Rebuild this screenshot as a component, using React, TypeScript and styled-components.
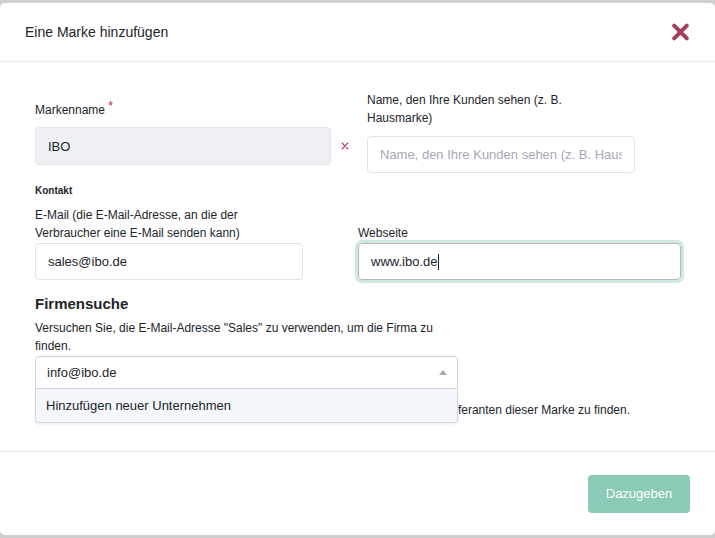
import { FC } from 'react';
import styled, { createGlobalStyle } from 'styled-components';

const Global = createGlobalStyle`
  html, body {
    margin: 0;
    background: #cfcfcf;
    font-family: "Liberation Sans", Arial, sans-serif;
    color: #212529;
  }
  * { box-sizing: border-box; }
`

const Modal = styled.div`
  margin-top: 3px;
  height: 532px;
  background: #fff;
  border-radius: 5px;
  display: flex;
  flex-direction: column;
`

const Header = styled.header`
  height: 59px;
  flex-shrink: 0;
  padding: 0 25px;
  display: flex;
  align-items: center;
  justify-content: space-between;
  border-bottom: 1px solid #e9ecef;
`

const Title = styled.h5`
  margin: 0;
  font-size: 14px;
  font-weight: 400;
`

const CloseButton = styled.button`
  border: 0;
  background: none;
  padding: 0;
  width: 19px;
  height: 18px;
  display: flex;
  cursor: pointer;
  svg { width: 19px; height: 18px; }
`

const Body = styled.div`
  padding: 29px 34px 32px 35px;
  border-bottom: 1px solid #e9ecef;
`

const Row = styled.div<{ $align?: string; $gap: number }>`
  display: flex;
  align-items: ${p => p.$align || 'flex-start'};
  gap: ${p => p.$gap}px;
`

const Column = styled.div<{ $width: number; $offset?: number }>`
  width: ${p => p.$width}px;
  margin-top: ${p => p.$offset || 0}px;
  display: flex;
  flex-direction: column;
`

const Label = styled.label<{ $space?: number; $max?: number }>`
  font-size: 12px;
  line-height: 18px;
  margin-bottom: ${p => p.$space ?? 9}px;
  max-width: ${p => (p.$max ? p.$max + 'px' : 'none')};
`

const Required = styled.sup`
  color: #b0345a;
  font-size: 13px;
  margin-left: 3px;
  vertical-align: top;
  position: relative;
  top: -4px;
`

const Input = styled.input<{ $filled?: boolean; $h?: number }>`
  width: 100%;
  height: ${p => p.$h || 37}px;
  padding: 0 12px;
  font: 13px "Liberation Sans", Arial, sans-serif;
  color: #212529;
  background: ${p => (p.$filled ? '#eef0f3' : '#fff')};
  border: 1px solid #e0e2e9;
  border-radius: 4px;
  outline: none;
  &::placeholder { color: #a7a7b7; }
`

const FocusedField = styled.div`
  height: 37px;
  padding: 0 12px;
  display: flex;
  align-items: center;
  font-size: 13px;
  border: 1px solid #b8b6c6;
  border-radius: 4px;
  box-shadow: 0 0 0 3px #cfe9e1;
`

const Caret = styled.span`
  width: 1px;
  height: 16px;
  background: #212529;
  margin-left: 1px;
`

const ClearMark = styled.span`
  width: 28px;
  height: 38px;
  margin: 36px 8px 0 0;
  display: flex;
  align-items: center;
  justify-content: center;
  svg { width: 8px; height: 8px; }
`

const SectionTag = styled.div`
  font-size: 10px;
  font-weight: 700;
  line-height: 14px;
  margin-top: 11px;
  margin-bottom: 8px;
`

const SectionTitle = styled.h4`
  margin: 15px 0 0;
  font-size: 15px;
  font-weight: 700;
  line-height: 18px;
`

const Hint = styled.p<{ $top: number; $width?: number }>`
  margin: ${p => p.$top}px 0 0;
  font-size: 12px;
  line-height: 18px;
  max-width: ${p => (p.$width ? p.$width + 'px' : 'none')};
`

const SelectWrap = styled.div`
  position: relative;
  width: 423px;
  margin-top: 1px;
`

const SelectBox = styled.div`
  height: 33px;
  padding: 0 10px 0 11px;
  display: flex;
  align-items: center;
  justify-content: space-between;
  font-size: 13px;
  border: 1px solid #cfd1d6;
  border-radius: 4px 4px 0 0;
  background: #fff;
`

const Arrow = styled.span`
  width: 0;
  height: 0;
  border-left: 4px solid transparent;
  border-right: 4px solid transparent;
  border-bottom: 5px solid #a9a9a9;
`

const Menu = styled.ul`
  position: absolute;
  top: 100%;
  left: 0;
  right: 0;
  margin: 0;
  padding: 0;
  list-style: none;
  background: #f4f8fd;
  border: 1px solid #d4d6db;
  border-top: 0;
  border-radius: 0 0 4px 4px;
  box-shadow: 0 2px 3px rgba(0, 0, 0, 0.06);
  z-index: 2;
`

const MenuItem = styled.li`
  height: 33px;
  padding: 0 10px;
  display: flex;
  align-items: center;
  font-size: 13px;
`

const Footer = styled.footer`
  flex: 1;
  padding: 0 25px;
  display: flex;
  align-items: center;
  justify-content: flex-end;
`

const SubmitButton = styled.button`
  width: 102px;
  height: 38px;
  border: 0;
  border-radius: 4px;
  background: #8ccab8;
  color: #fff;
  font: 13px "Liberation Sans", Arial, sans-serif;
  cursor: default;
`

const CrossIcon: FC<{ width: number }> = ({ width }) => (
  <svg viewBox="0 0 20 20" fill="none" stroke="#a83a5b" strokeWidth={width} strokeLinecap="round">
    <path d="M3 3 L17 17 M17 3 L3 17" />
  </svg>
)

export default function App() {
  return (
    <>
      <Global />
      <Modal>
        <Header>
          <Title>Eine Marke hinzufügen</Title>
          <CloseButton aria-label="Schließen">
            <CrossIcon width={4.4} />
          </CloseButton>
        </Header>
        <Body>
          <Row $gap={0}>
            <Column $width={296} $offset={10}>
              <Label $space={8}>
                Markenname<Required>*</Required>
              </Label>
              <Input $filled $h={38} defaultValue="IBO" />
            </Column>
            <ClearMark>
              <CrossIcon width={3} />
            </ClearMark>
            <Column $width={268}>
              <Label $max={230}>Name, den Ihre Kunden sehen (z. B. Hausmarke)</Label>
              <Input placeholder="Name, den Ihre Kunden sehen (z. B. Hausmarke)" />
            </Column>
          </Row>
          <SectionTag>Kontakt</SectionTag>
          <Row $gap={55} $align="flex-end">
            <Column $width={268}>
              <Label $space={1}>E-Mail (die E-Mail-Adresse, an die der Verbraucher eine E-Mail senden kann)</Label>
              <Input defaultValue="sales@ibo.de" />
            </Column>
            <Column $width={323}>
              <Label $space={1}>Webseite</Label>
              <FocusedField>
                www.ibo.de<Caret />
              </FocusedField>
            </Column>
          </Row>
          <SectionTitle>Firmensuche</SectionTitle>
          <Hint $top={6} $width={423}>
            Versuchen Sie, die E-Mail-Adresse "Sales" zu verwenden, um die Firma zu finden.
          </Hint>
          <SelectWrap>
            <SelectBox>
              info@ibo.de
              <Arrow />
            </SelectBox>
            <Menu>
              <MenuItem>Hinzufügen neuer Unternehmen</MenuItem>
            </Menu>
          </SelectWrap>
          <Hint $top={12}>
            Versuchen Sie, die E-Mail-Adresse des Verbrauchers zu verwenden, um die Lieferanten dieser Marke zu finden.
          </Hint>
        </Body>
        <Footer>
          <SubmitButton>Dazugeben</SubmitButton>
        </Footer>
      </Modal>
    </>
  )
}
